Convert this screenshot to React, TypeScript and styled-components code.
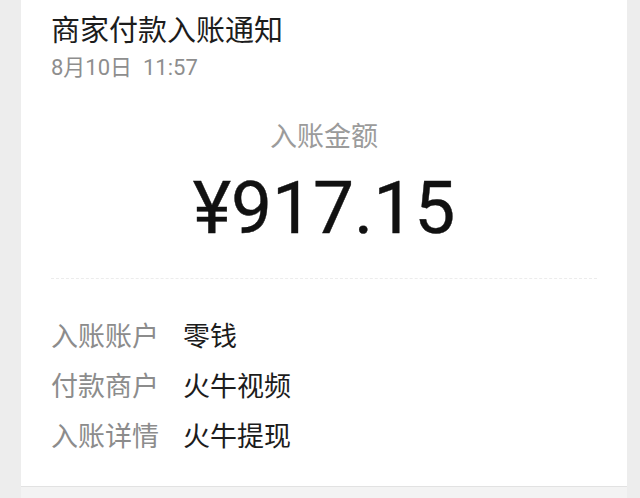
import styled, { createGlobalStyle } from 'styled-components';

const GlobalStyle = createGlobalStyle`
  html, body {
    margin: 0;
    padding: 0;
    background: #ededed;
  }
  body {
    font-family: Roboto, "Noto Sans CJK SC", sans-serif;
  }
`;

interface Row {
  label: string;
  value: string;
}

const rows: Row[] = [
  { label: '入账账户', value: '零钱' },
  { label: '付款商户', value: '火牛视频' },
  { label: '入账详情', value: '火牛提现' },
];

export default function App() {
  return (
    <>
      <GlobalStyle />
      <Page>
        <Card>
          <Title>商家付款入账通知</Title>
          <Time>8月10日&nbsp;&nbsp;11:57</Time>
          <AmountBlock>
            <AmountLabel>入账金额</AmountLabel>
            <Amount>¥917.15</Amount>
          </AmountBlock>
          <Divider />
          <Details>
            {rows.map((row) => (
              <DetailRow key={row.label}>
                <Label>{row.label}</Label>
                <Value>{row.value}</Value>
              </DetailRow>
            ))}
          </Details>
        </Card>
        <Footer />
      </Page>
    </>
  );
}

const Page = styled.div`
  width: 640px;
  height: 498px;
  overflow: hidden;
  padding: 0 13px 0 21px;
  box-sizing: border-box;
  display: flex;
  flex-direction: column;
`;

const Card = styled.div`
  background: #fff;
  height: 487px;
  box-sizing: border-box;
  border-bottom: 1px solid #e2e2e2;
  padding: 8px 30px 0 30px;
  display: flex;
  flex-direction: column;
`;

const Footer = styled.div`
  flex: 1;
  background: #f3f3f3;
`;

const Title = styled.div`
  font-size: 29px;
  line-height: 40px;
  color: #1c1c1c;
  font-family: "Noto Sans CJK SC", sans-serif;
`;

const Time = styled.div`
  font-size: 22px;
  line-height: 28px;
  margin-top: 6px;
  color: #8e8e8e;
`;

const AmountBlock = styled.div`
  display: flex;
  flex-direction: column;
  align-items: center;
  margin-top: 35px;
`;

const AmountLabel = styled.div`
  font-size: 27px;
  line-height: 36px;
  color: #9b9b9b;
  font-family: "Noto Sans CJK SC", sans-serif;
`;

const Amount = styled.div`
  font-size: 73px;
  line-height: 84px;
  margin-top: 13px;
  color: #111;
  -webkit-text-stroke: 0.4px #111;
`;

const Divider = styled.div`
  margin-top: 28px;
  border-top: 1px dashed #ececec;
`;

const Details = styled.div`
  display: flex;
  flex-direction: column;
  gap: 14px;
  margin-top: 38px;
`;

const DetailRow = styled.div`
  display: flex;
  gap: 24px;
  font-size: 27px;
  line-height: 36px;
  font-family: "Noto Sans CJK SC", sans-serif;
`;

const Label = styled.span`
  color: #8c8c8c;
`;

const Value = styled.span`
  color: #1c1c1c;
`;
